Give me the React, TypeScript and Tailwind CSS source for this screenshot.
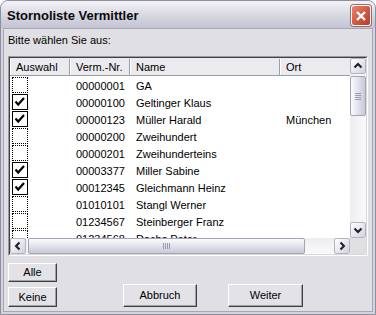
import React from "react";

type Row = { nr: string; name: string; ort?: string; checked: boolean };

const rows: Row[] = [
  { nr: "00000001", name: "GA", checked: false },
  { nr: "00000100", name: "Geltinger Klaus", checked: true },
  { nr: "00000123", name: "Müller Harald", ort: "München", checked: true },
  { nr: "00000200", name: "Zweihundert", checked: false },
  { nr: "00000201", name: "Zweihunderteins", checked: false },
  { nr: "00003377", name: "Miller Sabine", checked: true },
  { nr: "00012345", name: "Gleichmann Heinz", checked: true },
  { nr: "01010101", name: "Stangl Werner", checked: false },
  { nr: "01234567", name: "Steinberger Franz", checked: false },
  { nr: "01234568", name: "Dachs Peter", checked: false },
];

function CheckBox({ checked }: { checked: boolean }) {
  if (!checked) {
    return <div className="h-[16px] w-[16px] border border-dotted border-black bg-white" />;
  }
  return (
    <div className="flex h-[16px] w-[16px] items-center justify-center border border-black bg-white">
      <svg width="14" height="14" viewBox="0 0 14 14">
        <path d="M2.5 6.5 L5.2 9.5 L11 3" stroke="#000" strokeWidth="2.2" fill="none" />
      </svg>
    </div>
  );
}

const arrowPaths = {
  up: "M3.5 8.5 L7 5 L10.5 8.5",
  down: "M3.5 5.5 L7 9 L10.5 5.5",
  left: "M8.5 3.5 L5 7 L8.5 10.5",
  right: "M5.5 3.5 L9 7 L5.5 10.5",
};

function ScrollButton({ dir }: { dir: keyof typeof arrowPaths }) {
  return (
    <div className="flex h-[16px] w-[16px] shrink-0 items-center justify-center rounded-[2px] border border-[#b3b3c3] bg-gradient-to-br from-[#ffffff] to-[#d2d2de]">
      <svg width="14" height="14" viewBox="0 0 14 14">
        <path d={arrowPaths[dir]} stroke="#1c1c28" strokeWidth="2" fill="none" />
      </svg>
    </div>
  );
}

function Button({ label, className }: { label: string; className: string }) {
  return (
    <div
      className={`flex items-center justify-center border border-t-white border-l-white border-r-[#404040] border-b-[#404040] bg-[#e3e2e7] text-[11px] text-black shadow-[inset_-1px_-1px_0_#a0a0a8] ${className}`}
    >
      {label}
    </div>
  );
}

export default function App() {
  return (
    <div className="h-[315px] w-[376px] bg-white font-['Liberation_Sans',Arial,sans-serif]">
      <div className="flex h-[315px] w-[376px] flex-col overflow-hidden rounded-t-[8px] border border-[#8e8e9c] bg-[#d3d3de]">
        {/* Titelleiste */}
        <div className="flex h-[27px] shrink-0 items-start bg-gradient-to-b from-[#f3f3f7] via-[#d9d9e3] to-[#c3c3d2] pl-[6px]">
          <span className="mt-[8px] text-[13px] font-bold leading-[13px] text-[#0a0a0a]">
            Stornoliste Vermittler
          </span>
          <div className="ml-auto mr-[4px] mt-[4px] flex h-[21px] w-[20px] items-center justify-center rounded-[3px] border border-white bg-gradient-to-br from-[#e8866f] via-[#d35a45] to-[#b63b2c] shadow-[0_0_0_1px_#9a6c6c]">
            <svg width="12" height="12" viewBox="0 0 12 12">
              <path d="M2 2 L10 10 M10 2 L2 10" stroke="#fff" strokeWidth="2.4" />
            </svg>
          </div>
        </div>

        {/* Client-Bereich */}
        <div className="mx-[2px] mb-[2px] flex flex-1 flex-col border border-[#a6a6b6] bg-[#e0dfe3] text-[11px] text-black">
          <p className="pl-[4px] pt-[5px] leading-[13px]">Bitte wählen Sie aus:</p>

          {/* Liste */}
          <div className="ml-[4px] mt-[9px] h-[200px] w-[360px] border border-t-[#9b9ba3] border-l-[#9b9ba3] border-r-white border-b-white">
            <div className="flex h-[198px] w-[358px] flex-col border border-t-[#404040] border-l-[#404040] border-r-[#d8d7dc] border-b-[#d8d7dc] bg-white">
              <div className="flex h-[180px]">
                <div className="w-[340px] overflow-hidden">
                  <div className="flex h-[18px] border-b border-[#9d9da4] bg-[#ebeaee] pt-[1px] leading-[16px]">
                    <div className="w-[60px] border-r border-[#9d9da4] pl-[6px] shadow-[inset_1px_0_0_#fff]">Auswahl</div>
                    <div className="w-[60px] border-r border-[#9d9da4] pl-[6px] shadow-[inset_1px_0_0_#fff]">Verm.-Nr.</div>
                    <div className="w-[150px] border-r border-[#9d9da4] pl-[6px] shadow-[inset_1px_0_0_#fff]">Name</div>
                    <div className="flex-1 pl-[6px] shadow-[inset_1px_0_0_#fff]">Ort</div>
                  </div>
                  {rows.map((r) => (
                    <div key={r.nr} className="flex h-[17px] whitespace-nowrap leading-[15px]">
                      <div className="w-[60px] pl-[2px] pt-[1px]">
                        <CheckBox checked={r.checked} />
                      </div>
                      <div className="w-[60px] pl-[6px] pt-[3px]">{r.nr}</div>
                      <div className="w-[150px] pl-[6px] pt-[3px]">{r.name}</div>
                      <div className="flex-1 pl-[6px] pt-[3px]">{r.ort}</div>
                    </div>
                  ))}
                </div>
                {/* vertikale Scrollleiste */}
                <div className="flex w-[16px] flex-col bg-gradient-to-r from-[#eeeef2] to-[#f9f9fb]">
                  <ScrollButton dir="up" />
                  <div className="mt-[2px] flex h-[40px] flex-col items-center justify-center gap-[1px] rounded-[2px] border border-[#a4a4b8] bg-gradient-to-r from-[#fbfbfd] to-[#c9c9d8]">
                    <div className="h-[1px] w-[6px] bg-[#9a9aae]" />
                    <div className="h-[1px] w-[6px] bg-[#9a9aae]" />
                    <div className="h-[1px] w-[6px] bg-[#9a9aae]" />
                    <div className="h-[1px] w-[6px] bg-[#9a9aae]" />
                  </div>
                  <div className="flex-1" />
                  <ScrollButton dir="down" />
                </div>
              </div>
              {/* horizontale Scrollleiste */}
              <div className="flex h-[16px]">
                <div className="flex w-[340px] bg-gradient-to-b from-[#eeeef2] to-[#f9f9fb]">
                  <ScrollButton dir="left" />
                  <div className="ml-[2px] flex h-[16px] w-[277px] items-center justify-center gap-[1px] rounded-[2px] border border-[#a4a4b8] bg-gradient-to-b from-[#fbfbfd] to-[#c9c9d8]">
                    <div className="h-[6px] w-[1px] bg-[#9a9aae]" />
                    <div className="h-[6px] w-[1px] bg-[#9a9aae]" />
                    <div className="h-[6px] w-[1px] bg-[#9a9aae]" />
                    <div className="h-[6px] w-[1px] bg-[#9a9aae]" />
                  </div>
                  <div className="flex-1" />
                  <ScrollButton dir="right" />
                </div>
                <div className="w-[16px] bg-[#e0dfe3]" />
              </div>
            </div>
          </div>

          {/* Schaltflächen */}
          <Button label="Alle" className="ml-[4px] mt-[7px] h-[19px] w-[49px]" />
          <div className="mt-[2px] flex items-end pl-[4px]">
            <Button label="Keine" className="h-[20px] w-[49px]" />
            <Button label="Abbruch" className="ml-[66px] h-[23px] w-[74px]" />
            <Button label="Weiter" className="ml-[31px] h-[23px] w-[75px]" />
          </div>
        </div>
      </div>
    </div>
  );
}
